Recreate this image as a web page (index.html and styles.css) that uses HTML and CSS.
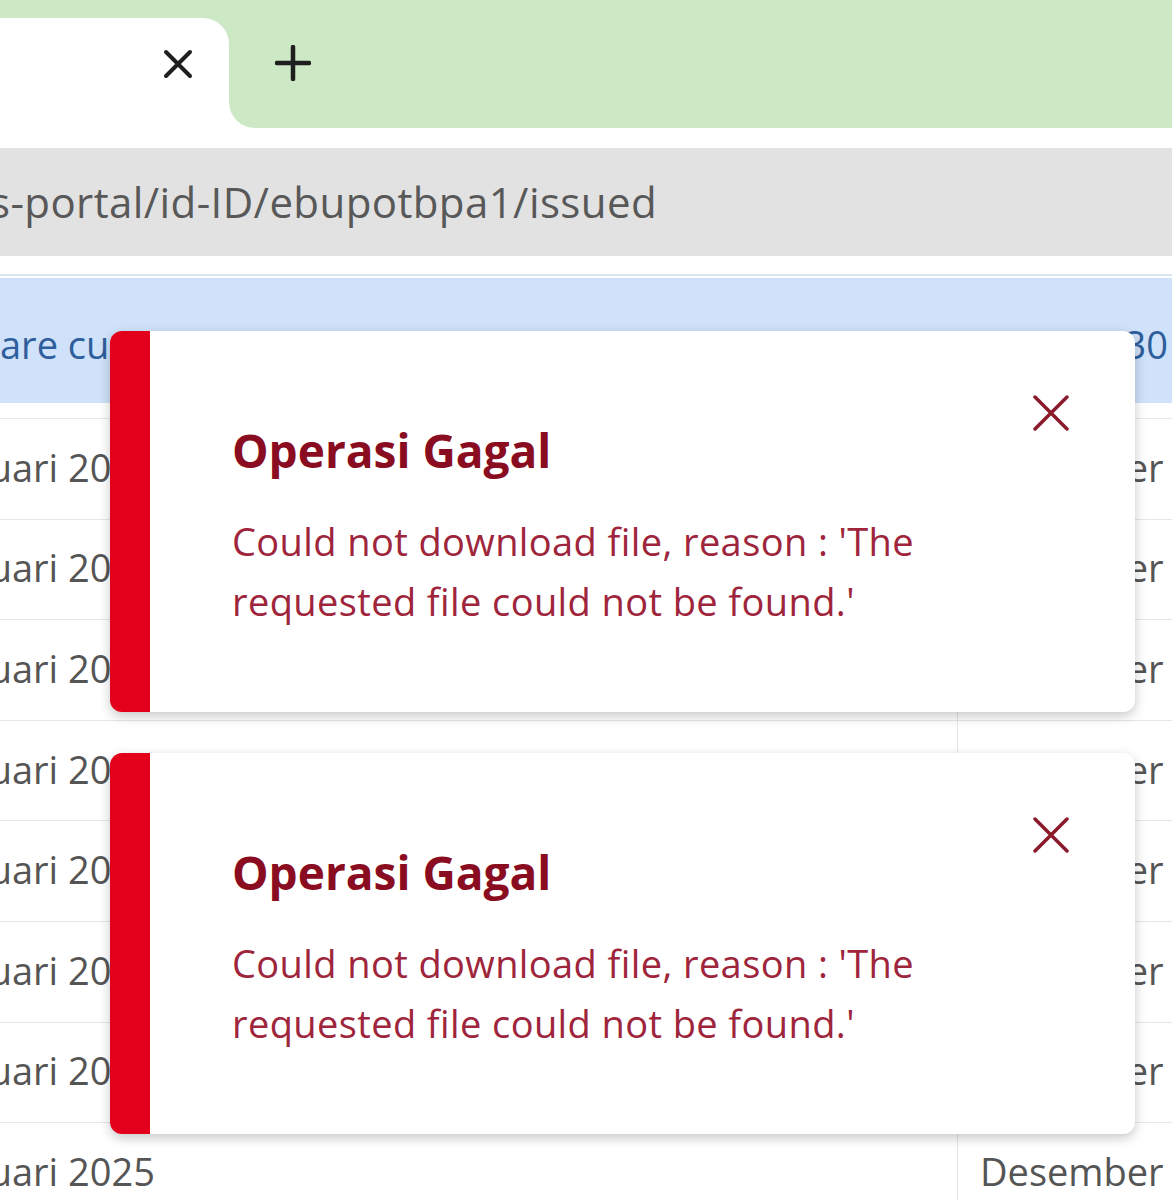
FILE: index.html
```html
<!DOCTYPE html>
<html lang="id">
<head>
    <meta charset="UTF-8">
    <meta name="viewport" content="width=device-width, initial-scale=1.0">
    <title>e-Bupot BPA1 - Issued</title>
    <link rel="stylesheet" href="styles.css">
</head>
<body>

    <div id="tab-strip">
        <div class="tab-slot">
            <div class="tab">
                <svg class="tab-close" width="30" height="30" viewBox="0 0 30 30">
                    <path d="M3 3 L27 27 M27 3 L3 27" stroke="#1f1f1f" stroke-width="4" stroke-linecap="round" fill="none"/>
                </svg>
            </div>
        </div>
        <div class="tab-rest">
            <svg class="new-tab" width="36" height="36" viewBox="0 0 36 36">
                <path d="M18 2 L18 34 M2 18 L34 18" stroke="#1f1f1f" stroke-width="4.5" stroke-linecap="round" fill="none"/>
            </svg>
        </div>
    </div>

    <div id="address-bar">
        <span class="url">s-portal/id-ID/ebupotbpa1/issued</span>
    </div>

    <div class="divider-line"></div>

    <div id="info-banner">
        <span class="banner-left">are cu</span>
        <span class="banner-right">30</span>
    </div>

    <div id="table">
        <div class="row"><span class="cell-date">Januari 2025</span><span class="cell-month">Desember</span></div>
        <div class="row"><span class="cell-date">Januari 2025</span><span class="cell-month">Desember</span></div>
        <div class="row"><span class="cell-date">Januari 2025</span><span class="cell-month">Desember</span></div>
        <div class="row"><span class="cell-date">Januari 2025</span><span class="cell-month">Desember</span></div>
        <div class="row"><span class="cell-date">Januari 2025</span><span class="cell-month">Desember</span></div>
        <div class="row"><span class="cell-date">Januari 2025</span><span class="cell-month">Desember</span></div>
        <div class="row"><span class="cell-date">Januari 2025</span><span class="cell-month">Desember</span></div>
        <div class="row"><span class="cell-date">Januari 2025</span><span class="cell-month">Desember</span></div>
    </div>

    <div id="toast-stack">
        <div class="toast">
            <svg class="toast-close" width="36" height="36" viewBox="0 0 36 36">
                <path d="M2 2 L34 34 M34 2 L2 34" stroke="#8b1a2b" stroke-width="3.5" stroke-linecap="round" fill="none"/>
            </svg>
            <h2 class="toast-title">Operasi Gagal</h2>
            <p class="toast-text">Could not download file, reason : 'The requested file could not be found.'</p>
        </div>
        <div class="toast">
            <svg class="toast-close" width="36" height="36" viewBox="0 0 36 36">
                <path d="M2 2 L34 34 M34 2 L2 34" stroke="#8b1a2b" stroke-width="3.5" stroke-linecap="round" fill="none"/>
            </svg>
            <h2 class="toast-title">Operasi Gagal</h2>
            <p class="toast-text">Could not download file, reason : 'The requested file could not be found.'</p>
        </div>
    </div>

</body>
</html>
```

FILE: styles.css
```css
body {
    margin: 0;
    width: 1172px;
    height: 1200px;
    overflow: hidden;
    position: relative;
    background-color: #fff;
    font-family: 'Open Sans', 'Noto Sans', sans-serif;
}

/* browser chrome */
#tab-strip {
    display: flex;
    height: 128px;
    background-color: #fff;
}

.tab-slot {
    width: 229px;
    background-color: #cce8c4;
}

.tab {
    height: 110px;
    margin-top: 18px;
    background-color: #fff;
    border-top-right-radius: 26px;
    position: relative;
}

.tab-close {
    position: absolute;
    left: 163px;
    top: 31px;
}

.tab-rest {
    flex: 1;
    background-color: #cce8c4;
    border-bottom-left-radius: 26px;
    padding-left: 46px;
    padding-top: 45px;
    box-sizing: border-box;
}

#address-bar {
    margin-top: 20px;
    height: 108px;
    background-color: #e2e2e2;
    display: flex;
    align-items: center;
    overflow: hidden;
}

.url {
    margin-left: -10px;
    font-size: 42px;
    letter-spacing: 0.4px;
    color: #585858;
    white-space: nowrap;
    padding-bottom: 2px;
}

.divider-line {
    height: 2px;
    margin-top: 18px;
    background-color: #d9e5f1;
}

#info-banner {
    margin-top: 2px;
    height: 125px;
    background-color: #cfe2f9;
    display: flex;
    justify-content: space-between;
    align-items: center;
    overflow: hidden;
    font-size: 38px;
    color: #2e5e9c;
    white-space: nowrap;
}

.banner-left,
.banner-right {
    padding-top: 6px;
}

.banner-right {
    padding-right: 4px;
}

/* table behind */
#table {
    margin-top: 15px;
    border-top: 1px solid #e6e6e6;
}

.row {
    display: flex;
    align-items: center;
    height: 100.6px;
    box-sizing: border-box;
    border-bottom: 1px solid #e6e6e6;
    font-size: 38px;
    color: #555;
    white-space: nowrap;
}

.cell-date {
    width: 957px;
    flex-shrink: 0;
    text-indent: -66px;
    padding-bottom: 4px;
}

.cell-month {
    flex: 1;
    align-self: stretch;
    border-left: 1px solid #e6e6e6;
    padding-left: 22px;
    display: flex;
    align-items: center;
    padding-bottom: 4px;
}

/* toast notifications */
#toast-stack {
    position: absolute;
    top: 331px;
    left: 110px;
    width: 1025px;
    display: flex;
    flex-direction: column;
    gap: 41px;
}

.toast {
    position: relative;
    height: 381px;
    box-sizing: border-box;
    background-color: #fff;
    border-left: 40px solid #e3001b;
    border-radius: 12px;
    box-shadow: 0 4px 12px rgba(0, 0, 0, 0.22);
    padding: 91px 110px 0 82px;
}

.toast-close {
    position: absolute;
    top: 64px;
    right: 66px;
}

.toast-title {
    margin: 0;
    font-size: 46px;
    line-height: 56px;
    font-weight: 700;
    color: #8a0c20;
}

.toast-text {
    margin: 33px 0 0 0;
    font-size: 38px;
    letter-spacing: 0.4px;
    line-height: 60px;
    color: #9e253b;
}
```
